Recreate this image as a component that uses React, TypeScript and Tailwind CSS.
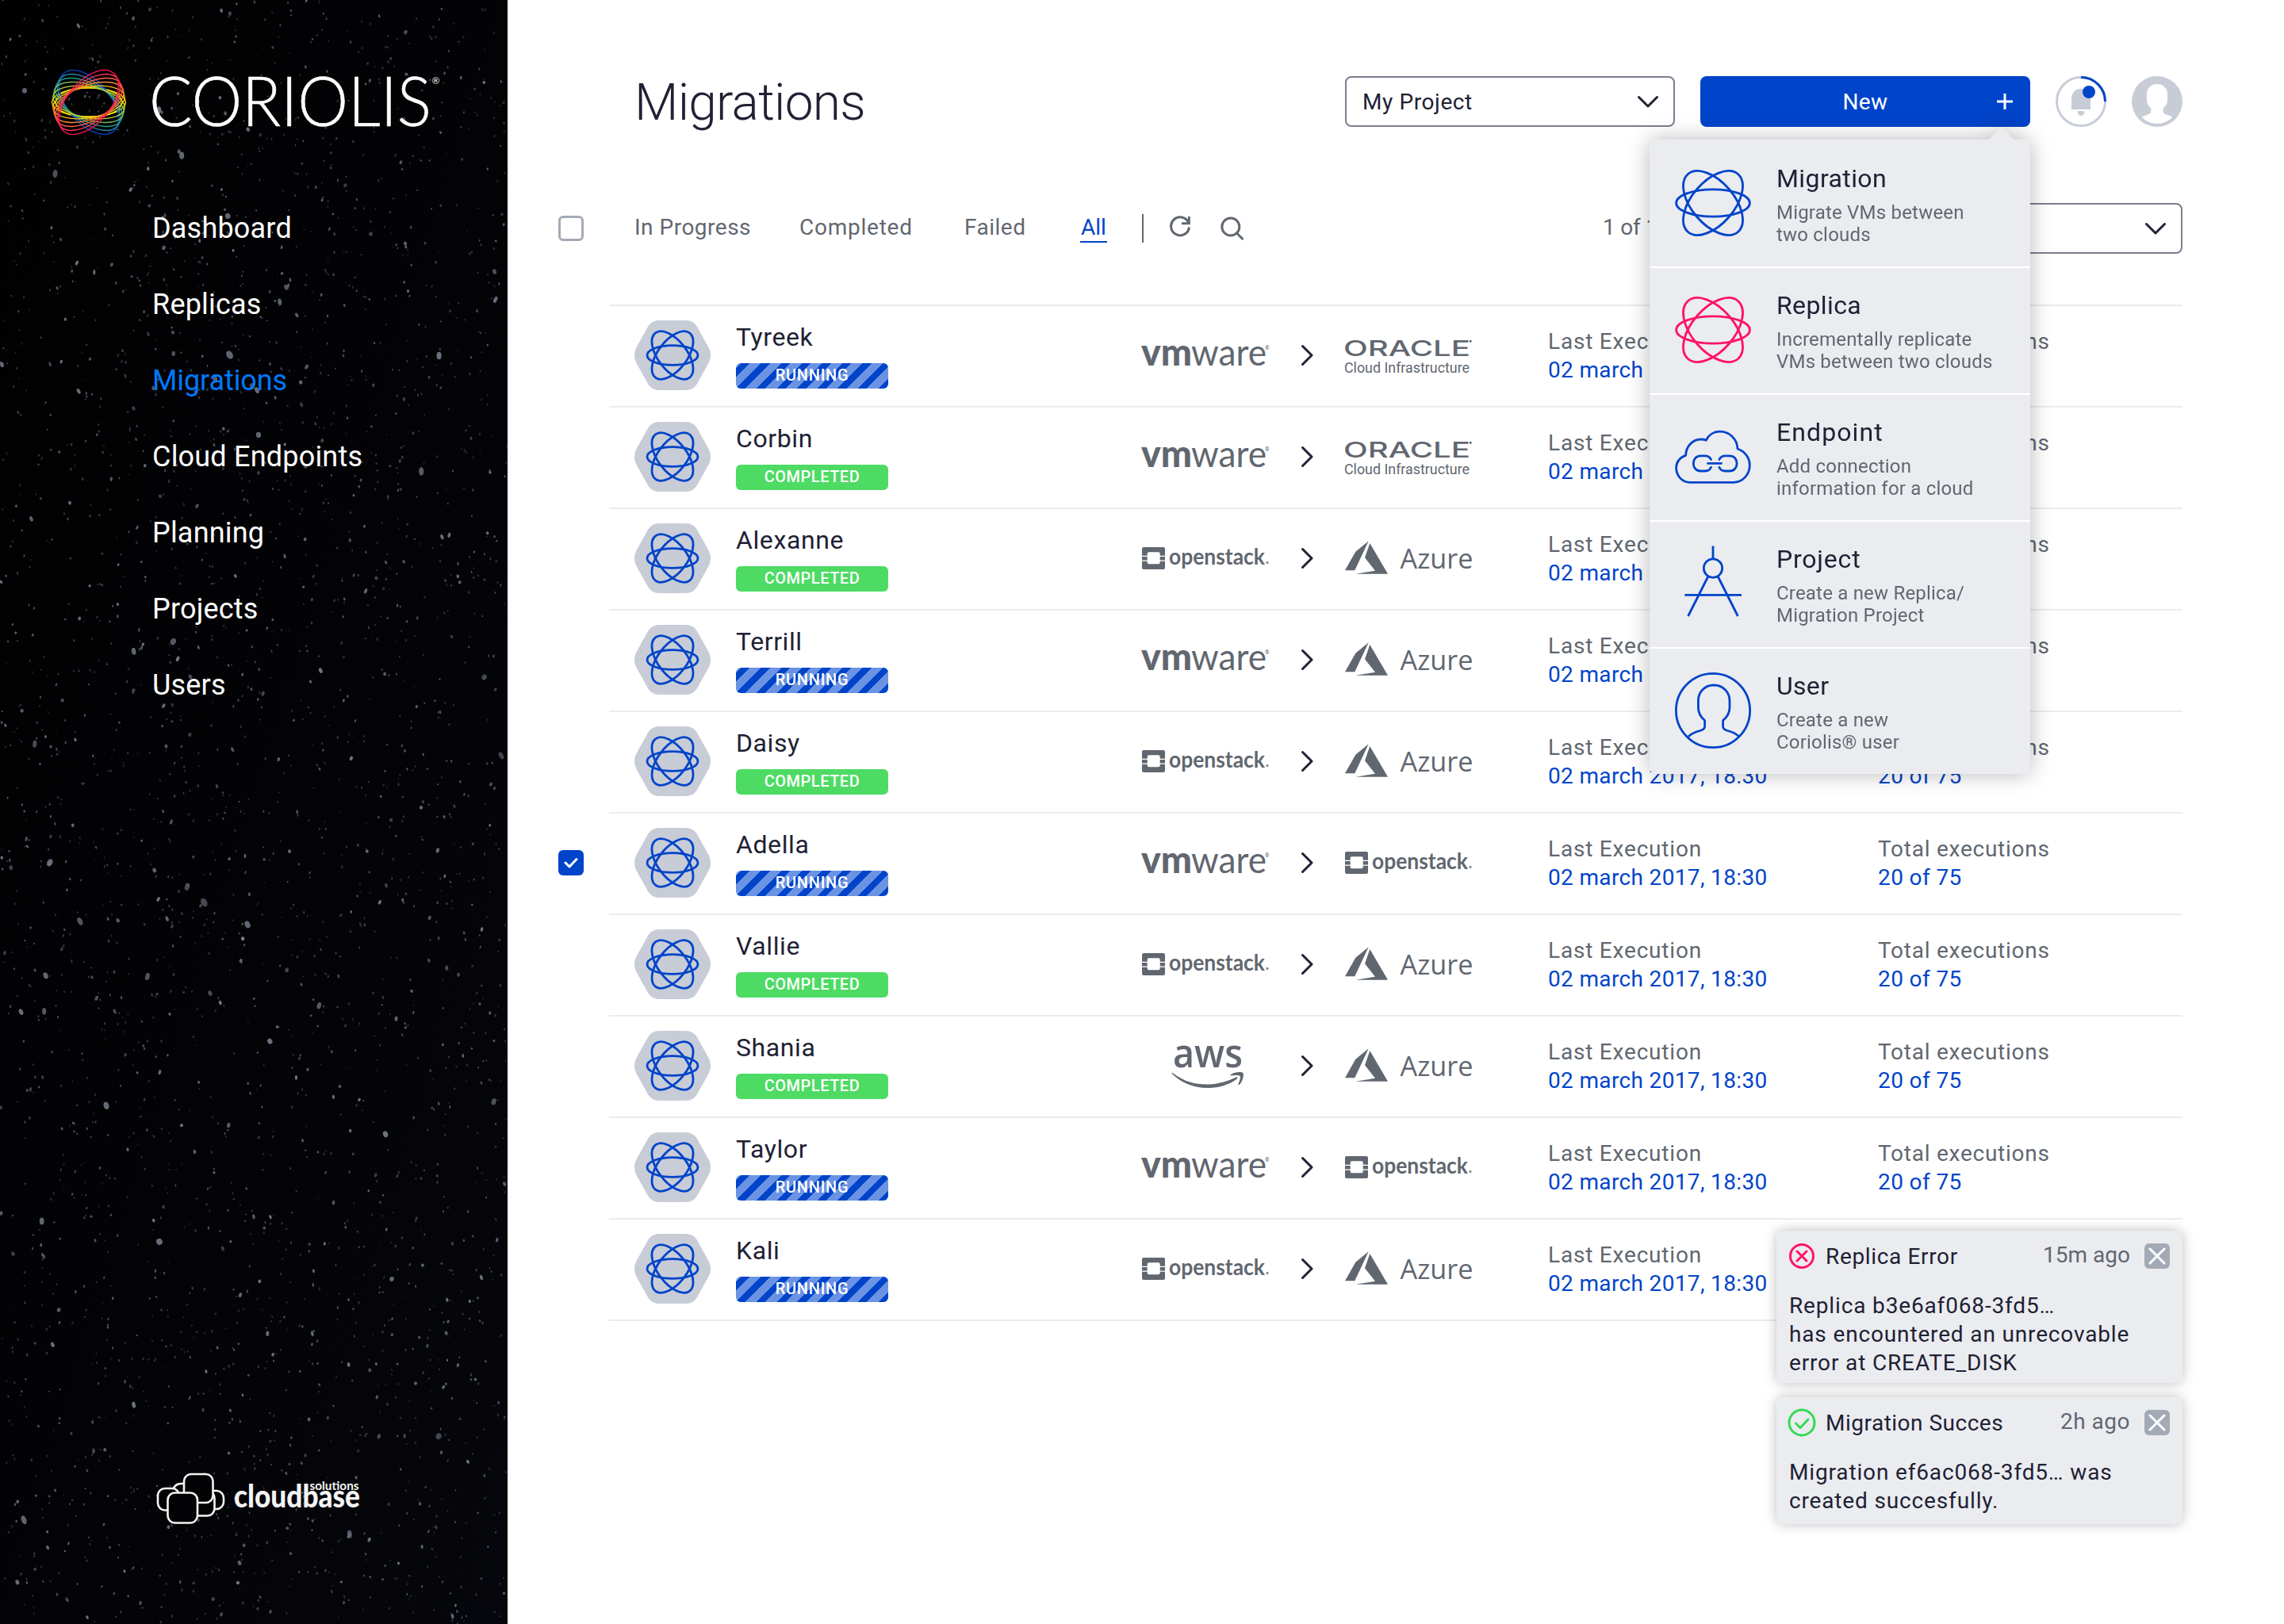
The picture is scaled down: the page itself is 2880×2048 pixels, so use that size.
import { ReactNode } from 'react'
import clsx from 'clsx'

const INK = '#202134'
const BLUE = '#0044CA'
const GRAY = '#616770'

/* ---------- Shared drawings ---------- */

function Chevron({ className }: { className?: string }) {
  return (
    <svg className={className} width="28" height="16" viewBox="0 0 28 16" fill="none" stroke={INK} strokeWidth="3" strokeLinecap="round" strokeLinejoin="round">
      <path d="M2.5 2.5 14 14 25.5 2.5" />
    </svg>
  )
}

function MenuAtom({ color }: { color: string }) {
  return (
    <svg width="96" height="96" viewBox="-48 -48 96 96" fill="none" stroke={color} strokeWidth="2.8">
      <ellipse rx="46.4" ry="17.2" />
      <ellipse rx="48.2" ry="26.8" transform="rotate(-49.2)" />
      <ellipse rx="48.2" ry="26.8" transform="rotate(49.2)" />
    </svg>
  )
}

function HexAtom() {
  return (
    <svg width="96" height="88" viewBox="0 0 96 88" fill="none">
      <path
        d="M31 0H65C71 0 76 3 79 8L94 35C96.700 41 96.700 47 94 53L79 80C76 85 71 88 65 88H31C25 88 20 85 17 80L2 53C-.7 47 -.7 41 2 35L17 8C20 3 25 0 31 0Z"
        fill="#C8CCD7"
      />
      <g transform="translate(48 44)" stroke={BLUE} strokeWidth="2.8">
        <ellipse rx="32" ry="12.4" />
        <ellipse rx="35.5" ry="18.3" transform="rotate(-52.6)" />
        <ellipse rx="35.5" ry="18.3" transform="rotate(52.6)" />
      </g>
    </svg>
  )
}

function CloudLink() {
  return (
    <svg width="96" height="96" viewBox="0 0 96 96" fill="none" stroke={BLUE} strokeWidth="2.8" strokeLinecap="round" strokeLinejoin="round">
      <path d="M19 80.300C9 80.300 1.600 72 1.600 61.800C1.600 54.500 6.500 48.500 13.600 46.300C14 34.500 22.500 26 33 26C35.500 26 37.500 26.300 39.300 27.200C42.500 20.500 49 16.200 56.500 16.200C69 16.200 78.500 25.500 79 38C88 41 94.300 49 94.300 58.500C94.300 70.500 85.500 80.300 73.500 80.300Z" />
      <path d="M45.500 51.500C44 48 41.500 46.800 38 46.800H32.500C27 46.800 23.300 51 23.300 56.400S27 66 32.500 66H38C41.500 66 44 64.800 45.500 61.300" />
      <path d="M55.900 51.500C57.400 48 59.900 46.800 63.400 46.800H68.900C74.400 46.800 78.100 51 78.100 56.400S74.400 66 68.900 66H63.400C59.900 66 57.400 64.800 55.900 61.300" />
      <path d="M41.500 56.400H58.500" />
    </svg>
  )
}

function Compass() {
  return (
    <svg width="96" height="96" viewBox="0 0 96 96" fill="none" stroke={BLUE} strokeWidth="2.8">
      <path d="M48 .5V17M41.800 39 16.600 89M54.200 39 79.400 89M12.300 62.400H84" />
      <circle cx="48" cy="28.600" r="11.700" />
    </svg>
  )
}

function UserOutline() {
  return (
    <svg width="96" height="96" viewBox="0 0 96 96" fill="none" stroke={BLUE} strokeWidth="2.8" strokeLinejoin="round">
      <circle cx="48" cy="48" r="46.600" />
      <path d="M17 81C20 77.500 26 75 33 73C36 72 37.600 71 37.600 68V60.500C32 56 29.400 50 29.400 44V36C29.400 24.500 37.500 16 49 16S69 24.500 69 36V44C69 50 66.200 56 60.600 60.500V68C60.600 71 62 72 65 73C72 75 77.500 77.500 80.500 80.500" />
    </svg>
  )
}

/* ---------- Sidebar ---------- */

function makeStars() {
  let seed = 90210
  const rnd = () => {
    seed = (seed * 1664525 + 1013904223) % 4294967296
    return seed / 4294967296
  }
  return Array.from({ length: 3000 }, () => {
    const big = rnd()
    const r = big > 0.985 ? 2.6 + rnd() * 1.6 : big > 0.85 ? 1.5 + rnd() * 0.9 : 0.8 + rnd() * 0.8
    return {
      x: rnd() * 640,
      y: rnd() * 2048,
      rx: r * (0.7 + rnd() * 0.3),
      ry: r * (0.9 + rnd() * 0.6),
      o: big > 0.85 ? 0.4 + rnd() * 0.4 : 0.2 + rnd() * 0.4,
      a: rnd() * 60 - 30,
    }
  })
}
const STARS = makeStars()

function StarField() {
  return (
    <svg className="absolute inset-0 blur-[0.6px]" width="640" height="2048" viewBox="0 0 640 2048">
      {STARS.map((s, i) => (
        <ellipse key={i} cx={s.x} cy={s.y} rx={s.rx} ry={s.ry} opacity={s.o} fill="#8A93A3" transform={`rotate(${s.a.toFixed(0)} ${s.x} ${s.y})`} />
      ))}
    </svg>
  )
}

const RED_RING = ['#FF1159', '#FF3550', '#FF5A3C', '#FF8A2B', '#FFB81C']
const BLUE_RING = ['#0044CA', '#2D84B9', '#1D9C8A', '#6DB85A', '#B9D23F']

function CoriolisLogo() {
  return (
    <svg className="overflow-visible" width="500" height="96" viewBox="60 80 500 96" fill="none">
      <g transform="translate(112 129)" strokeWidth="1.4">
        <ellipse rx="46.400" ry="18" stroke="#FFE600" />
        <ellipse rx="42" ry="19" stroke="#FFE600" />
        {[1, 0.8, 0.6, 0.4, 0.2].map((t, i) => (
          <ellipse key={t} rx={46.4 + 1.8 * t - (t < 1 ? 1 : 0)} ry={17.8 + 9 * t} transform={`rotate(${49.2 * t})`} stroke={BLUE_RING[i]} />
        ))}
        {[0.2, 0.4, 0.6, 0.8, 1].map((t, i) => (
          <ellipse key={t} rx={46.4 + 1.8 * t - (t < 1 ? 1 : 0)} ry={17.8 + 9 * t} transform={`rotate(${-49.2 * t})`} stroke={RED_RING[4 - i]} />
        ))}
      </g>
      <text x="188" y="159" fill="#fff" stroke="#fff" strokeWidth="0.6" fontFamily="Lato, sans-serif" fontWeight="300" fontSize="86" textLength="356" lengthAdjust="spacingAndGlyphs">
        CORIOLIS
      </text>
      <text x="544.500" y="106" fill="#fff" fontFamily="Lato, sans-serif" fontSize="12">
        ®
      </text>
    </svg>
  )
}

function CloudbaseLogo() {
  return (
    <svg className="overflow-visible" width="262" height="76" viewBox="195 1850 262 76" fill="#030305" stroke="#F4F4F4" strokeWidth="2.6">
      <rect x="258" y="1880" width="24" height="23" rx="9" />
      <rect x="218" y="1871" width="34" height="34" rx="10" />
      <rect x="199" y="1877" width="27" height="27.500" rx="9" />
      <rect x="236" y="1880" width="34.500" height="31.500" rx="9" />
      <rect x="232" y="1859" width="36.500" height="36" rx="9" />
      <rect x="211.500" y="1882.500" width="37.500" height="38" rx="9" />
      <g fill="#F4F4F4" stroke="none" fontFamily="Lato, sans-serif">
        <text x="295" y="1901" fontSize="39" fontWeight="900" textLength="159" lengthAdjust="spacingAndGlyphs">
          cloudbase
        </text>
        <text x="390.500" y="1878.500" fontSize="15.500" fontWeight="700" textLength="62" lengthAdjust="spacingAndGlyphs">
          solutions
        </text>
      </g>
    </svg>
  )
}

const NAV = ['Dashboard', 'Replicas', 'Migrations', 'Cloud Endpoints', 'Planning', 'Projects', 'Users']

function Sidebar() {
  return (
    <aside className="relative flex h-full w-[640px] shrink-0 flex-col overflow-hidden bg-linear-to-br from-[#010102] to-[#06070C]">
      <StarField />
      <div className="relative pt-20 pl-[60px]">
        <CoriolisLogo />
      </div>
      <nav className="relative mt-16 flex flex-col pl-48">
        {NAV.map((n) => (
          <a key={n} className={clsx('h-24 text-[36px] leading-[97px]', n === 'Migrations' ? 'tracking-[-0.1px] text-[#0078FF]' : 'tracking-[0.2px] text-white')}>
            {n}
          </a>
        ))}
      </nav>
      <div className="relative mt-auto pb-[122px] pl-[195px]">
        <CloudbaseLogo />
      </div>
    </aside>
  )
}

/* ---------- Header ---------- */

const MENU: { title: string; text: string[]; icon: ReactNode; tracking: string }[] = [
  { title: 'Migration', text: ['Migrate VMs between', 'two clouds'], icon: <MenuAtom color={BLUE} />, tracking: 'tracking-[0.4px]' },
  { title: 'Replica', text: ['Incrementally replicate', 'VMs between two clouds'], icon: <MenuAtom color="#FF1463" />, tracking: 'tracking-[0.4px]' },
  { title: 'Endpoint', text: ['Add connection', 'information for a cloud'], icon: <CloudLink />, tracking: 'tracking-[1.1px]' },
  { title: 'Project', text: ['Create a new Replica/', 'Migration Project'], icon: <Compass />, tracking: 'tracking-[0.8px]' },
  { title: 'User', text: ['Create a new', 'Coriolis® user'], icon: <UserOutline />, tracking: 'tracking-[0.3px]' },
]

function NewMenu() {
  return (
    <div className="absolute top-16 right-0 z-20 flex w-[480px] flex-col drop-shadow-[0_0_14px_rgba(0,0,0,0.28)]">
      <svg className="mr-5 self-end" width="32" height="16" viewBox="0 0 32 16">
        <path d="M0 16 16 0 32 16Z" fill="#EBECF0" />
      </svg>
      <div className="overflow-hidden rounded-lg bg-[#EBECF0]">
        {MENU.map((m, i) => (
          <div key={m.title} className={clsx('flex h-40 px-8', i > 0 && 'border-t-2 border-white')}>
            <div className={clsx('w-32', i > 0 ? 'pt-[30px]' : 'pt-8')}>{m.icon}</div>
            <div className={i > 0 ? 'pt-[27px]' : 'pt-[29px]'}>
              <div className={clsx('text-[32px] leading-10', m.tracking)}>{m.title}</div>
              <div className="mt-[9px] text-[24px] leading-7 tracking-[0.2px] text-[#616770]">
                {m.text.map((t) => (
                  <div key={t} className="whitespace-nowrap">
                    {t}
                  </div>
                ))}
              </div>
            </div>
          </div>
        ))}
      </div>
    </div>
  )
}

function Header() {
  return (
    <header className="flex h-16 items-center pr-32 pl-40">
      <h1 className="w-[896px] pt-[3px] text-[64px] leading-none font-light tracking-[-0.75px]">Migrations</h1>
      <div className="flex h-16 w-[416px] items-center justify-between rounded-lg border-2 border-[#7B7D8F] pr-[18px] pl-5 text-[28px] tracking-[0.6px]">
        <span className="pt-0.5">My Project</span>
        <Chevron />
      </div>
      <div className="relative ml-8">
        <button className="relative flex h-16 w-[416px] items-center justify-center rounded-lg bg-[#0044CA] text-[28px] tracking-[0.4px] text-white">
          <span className="pt-0.5">New</span>
          <svg className="absolute right-[21px]" width="22" height="22" viewBox="0 0 22 22" stroke="#fff" strokeWidth="3">
            <path d="M11 1V21M1 11H21" />
          </svg>
        </button>
        <NewMenu />
      </div>
      <svg className="ml-8" width="64" height="64" viewBox="0 0 64 64" fill="none">
        <circle cx="32" cy="32" r="30.500" stroke="#C8CCD7" strokeWidth="3" />
        <path d="M32 1.500A30.500 30.500 0 0 1 62.500 32" stroke={BLUE} strokeWidth="3" />
        <path d="M20 42V27.700A12 12 0 0 1 44 27.700V42Z" fill="#C8CCD7" />
        <path d="M27.700 44H36.300V45.700A4.300 4.300 0 0 1 27.700 45.700Z" fill="#C8CCD7" />
        <circle cx="42" cy="20" r="8" fill={BLUE} />
      </svg>
      <svg className="ml-8" width="64" height="64" viewBox="0 0 64 64">
        <circle cx="32" cy="32" r="32" fill="#C8CCD7" />
        <path
          d="M32 10C39.800 10 45 15.500 45 22.500V30C45 34.500 43 38 39.700 40.500V44C39.700 46.500 41 47.500 43.500 48.300L51.300 51.500C46.500 57 39.500 60 32 60S17.500 57 12.700 51.500L20.500 48.300C23 47.500 24.300 46.500 24.300 44V40.500C21 38 19 34.500 19 30V22.500C19 15.500 24.200 10 32 10Z"
          fill="#fff"
        />
      </svg>
    </header>
  )
}

/* ---------- Toolbar ---------- */

function Toolbar() {
  return (
    <div className="mt-24 flex h-16 items-center pr-32 pl-16 text-[28px] text-[#616770]">
      <div className="h-8 w-8 rounded-md border-[3px] border-[#A4AAB5]" />
      <div className="ml-16 flex pb-[3px]">
        <span className="w-52 tracking-[0.5px]">In Progress</span>
        <span className="w-52 tracking-[0.75px]">Completed</span>
        <span className="w-[146px] tracking-[0.5px]">Failed</span>
      </div>
      <span className="h-9 w-[34px] border-b-2 border-[#0044CA] text-center leading-[34px] text-[#0044CA]">All</span>
      <span className="ml-11 h-9 w-0.5 bg-[#616770]" />
      <svg className="mb-1 ml-8" width="28" height="28" viewBox="0 0 28 28" fill="none" stroke={GRAY} strokeWidth="3">
        <path d="M24.500 8.500A11.500 11.500 0 1 0 25.500 14.500" />
        <path d="M25.300 1V9.700H16" />
      </svg>
      <svg className="ml-[37px]" width="30" height="30" viewBox="0 0 30 30" fill="none" stroke={GRAY} strokeWidth="3">
        <circle cx="12.800" cy="13" r="11" />
        <path d="M20.500 21 28.500 29" />
      </svg>
      <span className="ml-[452px] w-[315px] pb-[3px] tracking-[-0.2px]">1 of 10</span>
      <div className="flex h-16 w-[416px] items-center justify-end rounded-lg border-2 border-[#7B7D8F] pr-[18px]">
        <Chevron />
      </div>
    </div>
  )
}

/* ---------- Provider logos ---------- */

function Vmware() {
  return (
    <g>
      <text x="-1" y="52.500" fontFamily="Lato, sans-serif" fontWeight="900" fontSize="47" textLength="64" lengthAdjust="spacingAndGlyphs">
        vm
      </text>
      <text x="62" y="52.500" fontFamily="Lato, sans-serif" fontSize="47" textLength="95" lengthAdjust="spacingAndGlyphs">
        ware
      </text>
      <text x="155" y="33" fontFamily="Roboto, sans-serif" fontSize="7">
        ®
      </text>
    </g>
  )
}

function Oracle() {
  return (
    <g>
      <text x="-2" y="40.500" fontFamily="Inter, sans-serif" fontWeight="500" fontSize="27.500" textLength="160" lengthAdjust="spacingAndGlyphs">
        ORACLE
      </text>
      <text x="-1" y="62" fontFamily="Roboto, sans-serif" fontSize="18" textLength="158" lengthAdjust="spacingAndGlyphs">
        Cloud Infrastructure
      </text>
      <circle cx="158.300" cy="22.200" r="1.500" />
    </g>
  )
}

function Openstack() {
  return (
    <g>
      <path d="M2 26H27A2 2 0 0 1 29 28V36.700H22.700V34.300A2 2 0 0 0 20.700 32.300H8.700A2 2 0 0 0 6.700 34.300V36.700H0V28A2 2 0 0 1 2 26Z" />
      <path d="M2 54H27A2 2 0 0 0 29 52V43.700H22.700V45.300A2 2 0 0 1 20.700 47.300H8.700A2 2 0 0 1 6.700 45.300V43.700H0V52A2 2 0 0 0 2 54Z" />
      <path d="M0 37.900H6.700V42.500H0ZM22.700 37.900H29V42.500H22.700Z" />
      <text x="34" y="47.500" fontFamily="Lato, sans-serif" fontWeight="700" fontSize="29" textLength="121" lengthAdjust="spacingAndGlyphs">
        openstack
      </text>
      <circle cx="158" cy="45.500" r="1.700" opacity="0.7" />
    </g>
  )
}

function Azure() {
  return (
    <g>
      <path d="M29.700 18.300 13.300 31.700 0 55.300H12.300ZM31.300 21 25 39.300 38 55.700 13.300 59.700H54Z" />
      <text x="69.500" y="52.500" fontFamily="'Open Sans', sans-serif" fontSize="34.500" textLength="92" lengthAdjust="spacingAndGlyphs">
        Azure
      </text>
    </g>
  )
}

function Aws() {
  return (
    <g>
      <text x="39" y="41.500" fontFamily="'Open Sans', sans-serif" fontWeight="600" fontSize="51" textLength="88" lengthAdjust="spacingAndGlyphs">
        aws
      </text>
      <path d="M38.500 49C54 60.500 66 63.500 83 63.500C95 63.500 108 59.500 118.500 54.500C120.500 53.800 121 55.500 119.500 56.700C109 64.500 96 68 83 68C64.500 68 49.500 61.500 38 50.300C37.200 49.400 37.700 48.500 38.500 49Z" />
      <path d="M111.500 51.500C115.500 48 125 47.300 127.300 49C129 51 127 60.500 122.500 64C121.700 64.700 121 64.300 121.300 63.500C122.500 60.500 125 54.500 123.500 53C122 51.500 115.500 52.200 112.300 52.600C111.300 52.700 111 52.100 111.500 51.500Z" />
    </g>
  )
}

type Provider = 'vmware' | 'oracle' | 'openstack' | 'azure' | 'aws'
const LOGOS: Record<Provider, () => ReactNode> = { vmware: Vmware, oracle: Oracle, openstack: Openstack, azure: Azure, aws: Aws }

function ProviderLogo({ name }: { name: Provider }) {
  const Logo = LOGOS[name]
  return (
    <svg className="shrink-0 overflow-visible" width="160" height="80" viewBox="0 0 160 80" fill={GRAY}>
      <Logo />
    </svg>
  )
}

/* ---------- List ---------- */

const ROWS: { name: string; running?: boolean; from: Provider; to: Provider; checked?: boolean }[] = [
  { name: 'Tyreek', running: true, from: 'vmware', to: 'oracle' },
  { name: 'Corbin', from: 'vmware', to: 'oracle' },
  { name: 'Alexanne', from: 'openstack', to: 'azure' },
  { name: 'Terrill', running: true, from: 'vmware', to: 'azure' },
  { name: 'Daisy', from: 'openstack', to: 'azure' },
  { name: 'Adella', running: true, from: 'vmware', to: 'openstack', checked: true },
  { name: 'Vallie', from: 'openstack', to: 'azure' },
  { name: 'Shania', from: 'aws', to: 'azure' },
  { name: 'Taylor', running: true, from: 'vmware', to: 'openstack' },
  { name: 'Kali', running: true, from: 'openstack', to: 'azure' },
]

function Row({ row }: { row: (typeof ROWS)[number] }) {
  return (
    <div className="flex h-32 items-center">
      <div className="w-16">
        {row.checked && (
          <div className="flex h-8 w-8 items-center justify-center rounded-md bg-[#0044CA]">
            <svg width="18" height="14" viewBox="0 0 18 14" fill="none" stroke="#fff" strokeWidth="3" strokeLinecap="round" strokeLinejoin="round">
              <path d="M2 7 7 12 16 2.500" />
            </svg>
          </div>
        )}
      </div>
      <div className="flex h-full flex-1 items-center border-t-2 border-[#EBECF0] pb-0.5 pl-8">
        <HexAtom />
        <div className="ml-8 w-[512px] self-start pt-[19px]">
          <div className="text-[32px] leading-10 tracking-[0.6px]">{row.name}</div>
          <div
            className={clsx(
              'mt-[13px] h-8 w-48 rounded-md text-center text-[20px] leading-[31px] font-medium text-white',
              row.running
                ? 'bg-[repeating-linear-gradient(135deg,#6B93E3_0px,#6B93E3_4.5px,#0044CA_4.5px,#0044CA_12.5px,#6B93E3_12.5px,#6B93E3_18.1px)] tracking-[0.7px]'
                : 'bg-[#4DDB64] tracking-[0.5px]',
            )}
          >
            {row.running ? 'RUNNING' : 'COMPLETED'}
          </div>
        </div>
        <ProviderLogo name={row.from} />
        <div className="flex w-24 justify-center">
          <Chevron className="-rotate-90" />
        </div>
        <ProviderLogo name={row.to} />
        <div className="ml-24 w-[415px] pt-0.5 text-[28px] leading-9">
          <div className="tracking-[0.8px] text-[#616770]">Last Execution</div>
          <div className="tracking-[0.35px] text-[#0044CA]">02 march 2017, 18:30</div>
        </div>
        <div className="pt-0.5 text-[28px] leading-9">
          <div className="pl-px tracking-[0.75px] text-[#616770]">Total executions</div>
          <div className="pl-px tracking-[0.4px] text-[#0044CA]">20 of 75</div>
        </div>
      </div>
    </div>
  )
}

/* ---------- Notifications ---------- */

function Toast({ ok, title, time, lines }: { ok?: boolean; title: string; time: string; lines: string[] }) {
  return (
    <div className={clsx('w-[512px] rounded-lg bg-[#EBECF0] px-4 pt-4 text-[28px] shadow-[0_0_16px_rgba(0,0,0,0.26)]', ok ? 'h-40' : 'h-48')}>
      <div className="flex h-8 items-center">
        <svg className="-ml-0.5" width="36" height="36" viewBox="0 0 36 36" fill="none" strokeWidth="3" stroke={ok ? '#34DB52' : '#FF1463'} strokeLinecap="round" strokeLinejoin="round">
          <circle cx="18" cy="18" r={ok ? 16 : 14.5} />
          {ok ? <path d="M10.500 19 16 24.500 26 14" /> : <path d="M12 12 24 24M24 12 12 24" />}
        </svg>
        <span className={clsx('ml-3 pt-0.5', ok ? 'tracking-[0.5px]' : 'tracking-[0.65px]')}>{title}</span>
        <span className={clsx('mr-[18px] ml-auto pb-0.5 text-[#616770]', ok && 'tracking-[0.5px]')}>{time}</span>
        <div className="flex h-8 w-8 items-center justify-center rounded-md bg-[#A4AAB5]">
          <svg width="22" height="22" viewBox="0 0 22 22" stroke="#fff" strokeWidth="3" strokeLinecap="round">
            <path d="M2 2 20 20M20 2 2 20" />
          </svg>
        </div>
      </div>
      <div className="mt-[29px] leading-9 tracking-[0.85px]">
        {lines.map((l) => (
          <div key={l} className="whitespace-nowrap">
            {l}
          </div>
        ))}
      </div>
    </div>
  )
}

export default function App() {
  return (
    <div className="relative flex h-[2048px] w-[2880px] overflow-hidden bg-white font-['Roboto',sans-serif] text-[#202134]">
      <Sidebar />
      <main className="flex-1 pt-24">
        <Header />
        <Toolbar />
        <div className="mt-16 mr-32 ml-16">
          {ROWS.map((r) => (
            <Row key={r.name} row={r} />
          ))}
          <div className="ml-16 h-0.5 bg-[#EBECF0]" />
        </div>
      </main>
      <div className="absolute right-32 bottom-[126px] z-10 flex flex-col gap-[18px]">
        <Toast title="Replica Error" time="15m ago" lines={['Replica b3e6af068-3fd5…', 'has encountered an unrecovable', 'error at CREATE_DISK']} />
        <Toast ok title="Migration Succes" time="2h ago" lines={['Migration ef6ac068-3fd5… was', 'created succesfully.']} />
      </div>
    </div>
  )
}
